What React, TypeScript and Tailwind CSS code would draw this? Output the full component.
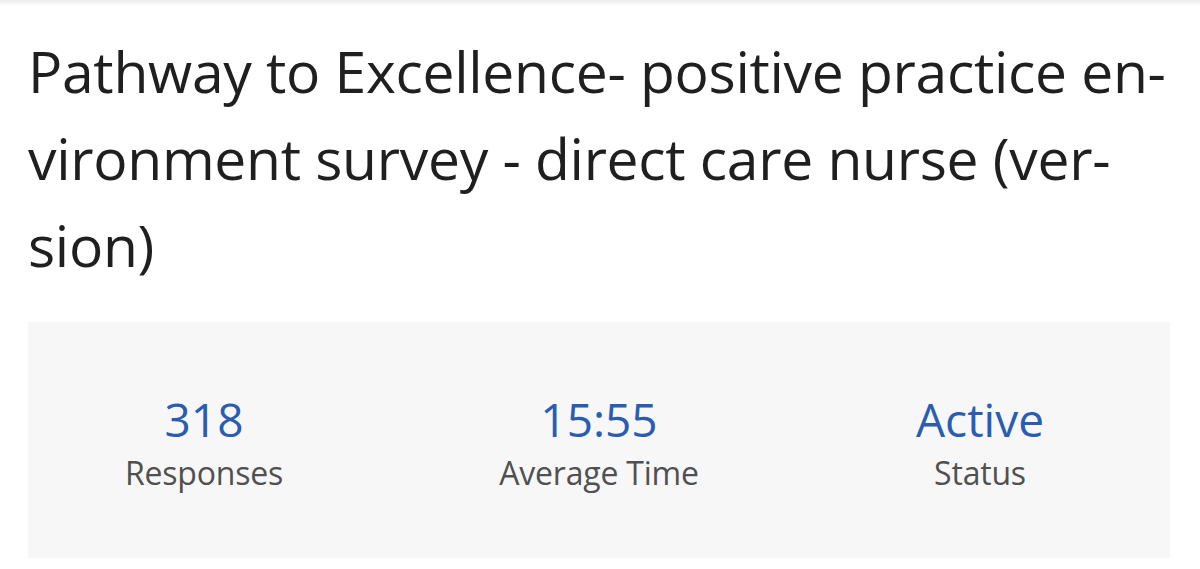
import React from 'react';

const stats = [
  { value: '318', label: 'Responses' },
  { value: '15:55', label: 'Average Time' },
  { value: 'Active', label: 'Status' },
];

const App: React.FC = () => {
  return (
    <div className="min-h-[569px] w-full bg-white" style={{ fontFamily: '"Open Sans", "Noto Sans", sans-serif' }}>
      <div className="h-[6px] w-full bg-gradient-to-b from-[#ececec] to-white" />
      <div className="pl-[28px] pr-[30px]">
        <h1 className="pt-[22px] text-[57px] font-normal leading-[87px] tracking-[-0.3px] text-[#1f1f1f]">
          <span className="block whitespace-nowrap">Pathway to Excellence- positive practice en-</span>
          <span className="block whitespace-nowrap">vironment survey - direct care nurse (ver-</span>
          <span className="block whitespace-nowrap">sion)</span>
        </h1>
        <div className="mt-[33px] grid h-[236px] grid-cols-[352px_438px_324px] items-center bg-[#f7f7f7]">
          {stats.map((s) => (
            <div key={s.label} className="flex flex-col items-center pt-[5px]">
              <span className="text-[46px] leading-[56px] text-[#2a5db0]">{s.value}</span>
              <span className="mt-[5px] text-[32px] leading-[42px] tracking-[-0.2px] text-[#505050]">{s.label}</span>
            </div>
          ))}
        </div>
      </div>
    </div>
  );
};

export default App;
